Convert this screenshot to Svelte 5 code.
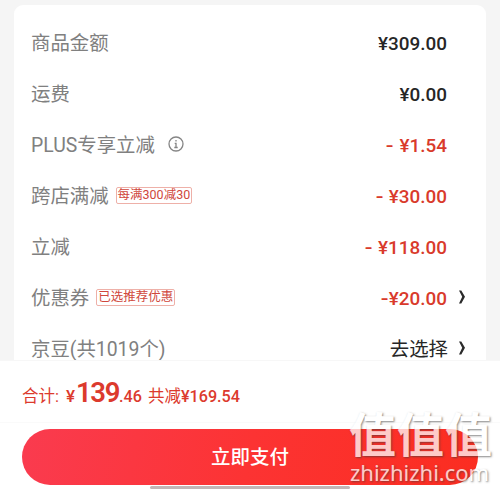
<script lang="ts">
	type Row = {
		label: string;
		value: string;
		minus?: string;
		info?: boolean;
		tag?: string;
		arrow?: boolean;
	};

	const rows: Row[] = [
		{ label: '商品金额', value: '¥309.00' },
		{ label: '运费', value: '¥0.00' },
		{ label: 'PLUS专享立减', value: '¥1.54', minus: '- ', info: true },
		{ label: '跨店满减', value: '¥30.00', minus: '- ', tag: '每满300减30' },
		{ label: '立减', value: '¥118.00', minus: '- ' },
		{ label: '优惠券', value: '¥20.00', minus: '-', tag: '已选推荐优惠', arrow: true },
		{ label: '京豆(共1019个)', value: '去选择', arrow: true }
	];
</script>

<main class="checkout">
	<section class="scroll">
		<div class="card">
			{#each rows as row}
				<div class="row">
					<span class="label">{row.label}</span>
					{#if row.info}
						<svg class="info" viewBox="0 0 16 16" width="16" height="16">
							<circle cx="8" cy="8" r="7" />
							<path d="M8 4v1.6M6.7 7.3H8v4M6.3 11.5h3.4" />
						</svg>
					{/if}
					{#if row.tag}
						<span class="tag">{row.tag}</span>
					{/if}
					<span class="value" class:discount={row.minus} class:choose={row.arrow && !row.minus}>
						{#if row.minus}<span class="minus">{row.minus}</span>{/if}{row.value}
					</span>
					{#if row.arrow}
						<svg class="arrow" viewBox="0 0 8 14" width="8" height="14">
							<path d="M1 .5h2.3l3.7 6.3-3.7 6.7H1l3.2-6.7z" />
						</svg>
					{/if}
				</div>
			{/each}
		</div>
	</section>

	<footer>
		<div class="total">
			<span class="sum">合计:</span>
			<span class="yen">¥</span>
			<span class="big">139</span>
			<span class="cents">.46</span>
			<span class="saved">共减<b>¥169.54</b></span>
		</div>
		<div class="pay">
			<button>立即支付</button>
		</div>
		<div class="home"></div>
	</footer>

	<div class="watermark">
		<div class="marks">
			<span>值</span><span>值</span><span>值</span>
		</div>
		<div class="site">zhizhizhi.com</div>
	</div>
</main>

<style>
	:global(body) {
		margin: 0;
		background: #fff;
		font-family: Roboto, "Noto Sans CJK SC", sans-serif;
	}

	.checkout {
		position: relative;
		width: 500px;
		height: 490px;
		overflow: hidden;
		display: flex;
		flex-direction: column;
	}

	.scroll {
		height: 360px;
		box-sizing: border-box;
		padding: 5px 14px 0;
		background: #f5f5f5;
		overflow: hidden;
	}

	.card {
		padding: 13px 17px 0;
		background: #fff;
		border-radius: 9px;
	}

	.row {
		display: flex;
		align-items: center;
		height: 51px;
		line-height: 28px;
		padding-right: 2px;
	}

	.label {
		font-size: 19.4px;
		color: #808080;
		white-space: nowrap;
	}

	.info {
		margin: -3px 0 0 13px;
		fill: none;
		stroke: #858585;
		stroke-width: 1.3;
	}

	.tag {
		margin: -3px 0 0 7px;
		padding: 0 1px;
		height: 15px;
		border: 1px solid #eeb0a8;
		border-radius: 2px;
		font-size: 12.5px;
		line-height: 14px;
		color: #d0473c;
		white-space: nowrap;
	}

	.value {
		display: flex;
		margin-left: auto;
		margin-right: 20px;
		font-size: 18.9px;
		font-weight: 500;
		color: #262626;
	}

	.minus {
		white-space: pre;
		transform: scaleX(1.2);
		transform-origin: right;
	}

	.discount {
		color: #d93a2b;
	}

	.choose {
		margin-right: 19px;
		font-size: 19.4px;
		font-weight: 400;
	}

	.arrow {
		margin: -3px 1px 0 -9px;
		fill: #2b2b2b;
	}

	footer {
		height: 130px;
		box-sizing: border-box;
		border-top: 1px solid #f7f7f7;
		background: #fff;
		display: flex;
		flex-direction: column;
	}

	.total {
		display: flex;
		align-items: baseline;
		height: 61px;
		padding-left: 22px;
		line-height: 63px;
		color: #dc3a2d;
		border-bottom: 1px solid #fafafa;
	}

	.sum {
		width: 44px;
		font-size: 16.5px;
	}

	.yen {
		font-size: 17px;
		font-weight: 500;
	}

	.big {
		margin-left: 1px;
		font-size: 27.5px;
		font-weight: 600;
		letter-spacing: -1.4px;
	}

	.cents {
		font-size: 16.2px;
		font-weight: 500;
	}

	.saved {
		margin-left: 6px;
		font-size: 16.5px;
	}

	.saved b {
		font-size: 16.2px;
		font-weight: 500;
	}

	.pay {
		padding: 6px 22px 0;
	}

	button {
		display: block;
		width: 100%;
		height: 56px;
		padding: 2px 0 0;
		border: none;
		border-radius: 28px;
		background: linear-gradient(100deg, #fa3b4f, #fc3333 50%, #fb2d20);
		color: #fff;
		font: 500 19.5px/28px Roboto, "Noto Sans CJK SC", sans-serif;
	}

	.home {
		width: 200px;
		height: 3px;
		margin: 1px auto 0;
		border-radius: 2px;
		background: #c3b5b6;
	}

	.watermark {
		position: absolute;
		left: 349px;
		top: 407px;
		color: #fff;
		opacity: 0.75;
		text-shadow: 1px 1px 2px rgba(60, 60, 60, 0.8);
	}

	.marks {
		display: flex;
		gap: 1px;
		font-family: "Noto Sans CJK SC", sans-serif;
		font-size: 47px;
		font-weight: 700;
		line-height: 50px;
	}

	.site {
		padding-left: 1px;
		font-family: "Noto Sans", sans-serif;
		font-size: 22px;
		line-height: 30px;
	}
</style>
